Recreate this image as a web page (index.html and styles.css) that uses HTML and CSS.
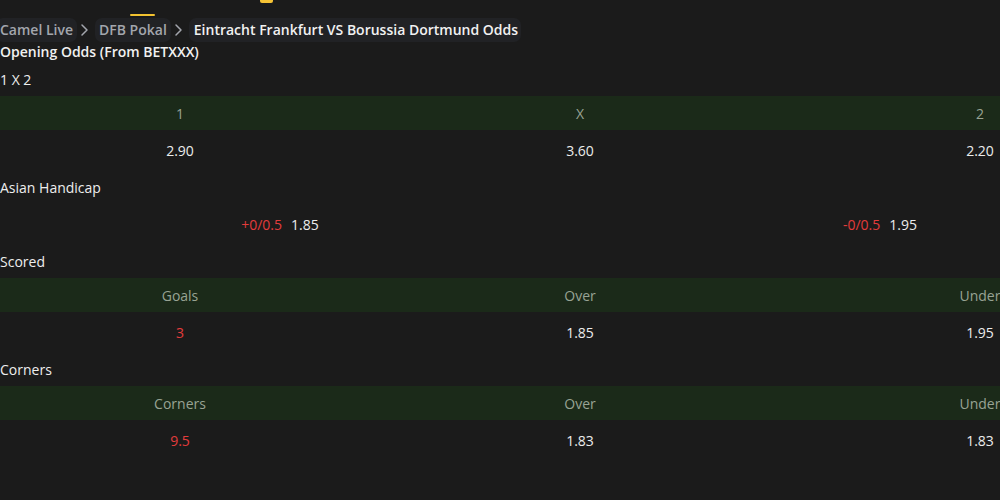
FILE: index.html
```html
<!DOCTYPE html>
<html lang="en">
<head>
  <meta charset="UTF-8">
  <title>Eintracht Frankfurt VS Borussia Dortmund Odds</title>
  <link rel="stylesheet" href="styles.css">
</head>
<body>
  <div class="page">
    <div class="topnav">
      <span class="nav-underline"></span>
      <span class="nav-mark"></span>
    </div>

    <nav class="crumbs">
      <a class="crumb">Camel Live</a>
      <svg class="chev" width="10" height="14" viewBox="0 0 10 14"><path d="M3 2l5 5-5 5" fill="none" stroke="#a3a6ad" stroke-width="1.5" stroke-linecap="round" stroke-linejoin="round"/></svg>
      <a class="crumb">DFB Pokal</a>
      <svg class="chev" width="10" height="14" viewBox="0 0 10 14"><path d="M3 2l5 5-5 5" fill="none" stroke="#a3a6ad" stroke-width="1.5" stroke-linecap="round" stroke-linejoin="round"/></svg>
      <span class="crumb current">Eintracht Frankfurt VS Borussia Dortmund Odds</span>
    </nav>

    <h2 class="page-title">Opening Odds (From BETXXX)</h2>

    <section class="market">
      <div class="market-title">1 X 2</div>
      <div class="odds-table">
        <div class="row head">
          <div class="cell">1</div>
          <div class="cell">X</div>
          <div class="cell">2</div>
        </div>
        <div class="row">
          <div class="cell">2.90</div>
          <div class="cell">3.60</div>
          <div class="cell">2.20</div>
        </div>
      </div>
    </section>

    <section class="market">
      <div class="market-title">Asian Handicap</div>
      <div class="odds-table">
        <div class="row two">
          <div class="cell"><span class="red">+0/0.5</span><span>1.85</span></div>
          <div class="cell"><span class="red">-0/0.5</span><span>1.95</span></div>
        </div>
      </div>
    </section>

    <section class="market">
      <div class="market-title">Scored</div>
      <div class="odds-table">
        <div class="row head">
          <div class="cell">Goals</div>
          <div class="cell">Over</div>
          <div class="cell">Under</div>
        </div>
        <div class="row">
          <div class="cell red">3</div>
          <div class="cell">1.85</div>
          <div class="cell">1.95</div>
        </div>
      </div>
    </section>

    <section class="market">
      <div class="market-title">Corners</div>
      <div class="odds-table">
        <div class="row head">
          <div class="cell">Corners</div>
          <div class="cell">Over</div>
          <div class="cell">Under</div>
        </div>
        <div class="row">
          <div class="cell red">9.5</div>
          <div class="cell">1.83</div>
          <div class="cell">1.83</div>
        </div>
      </div>
    </section>
  </div>
</body>
</html>
```

FILE: styles.css
```css
/* Base */
* { margin: 0; padding: 0; box-sizing: border-box; }
html, body { overflow: hidden; }
body {
  background: #1b1b1b;
  color: #ececec;
  font-family: 'Open Sans', 'Noto Sans', sans-serif;
  font-size: 14px;
}
a { text-decoration: none; color: inherit; }

.page {
  width: 1000px;
  height: 500px;
  overflow: hidden;
}

/* Top nav leftovers (scrolled out of view) */
.topnav {
  height: 18px;
  display: flex;
  align-items: flex-start;
}
.nav-underline {
  margin: 14px 0 0 130px;
  width: 25px;
  height: 2px;
  background: #f2c230;
  border-radius: 1px;
}
.nav-mark {
  margin-left: 105px;
  width: 13px;
  height: 3px;
  background: #f6c335;
  border-radius: 0 0 2px 2px;
}

/* Breadcrumbs */
.crumbs {
  height: 24px;
  display: flex;
  align-items: center;
  margin-left: -4px;
  font-weight: 600;
  white-space: nowrap;
}
.crumb {
  height: 24px;
  line-height: 24px;
  padding: 0 4px;
  border-radius: 7px;
  background: #212225;
  color: #a3a6ad;
}
.crumb.current { color: #f1f1f1; padding: 0 3px 0 5px; }
.chev { margin: 0 6px 0 2px; }

.page-title {
  font-size: 14px;
  font-weight: 600;
  line-height: 20px;
  color: #f1f1f1;
}

/* Markets */
.market { margin-top: 8px; }
.market-title {
  line-height: 20px;
  margin-bottom: 6px;
  color: #eeeeee;
}
.odds-table {
  margin-left: -20px;
  width: 1200px;
}
.row {
  display: grid;
  grid-template-columns: repeat(3, 1fr);
  height: 40px;
  align-items: center;
  text-align: center;
}
.row.two { grid-template-columns: repeat(2, 1fr); }
.row.head {
  height: 34px;
  background: #1b2a19;
  color: #98a394;
}
.row.two .cell {
  display: flex;
  justify-content: center;
  gap: 9px;
}
.red { color: #e23c3c; }
```
